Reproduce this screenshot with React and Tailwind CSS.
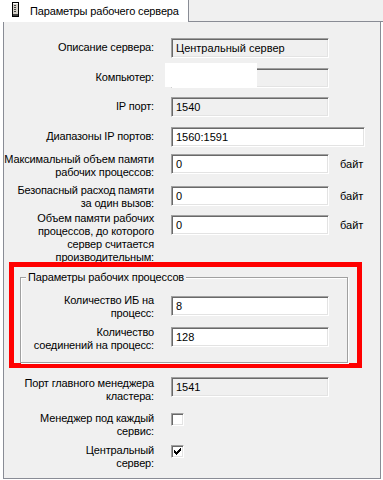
import React from 'react';

// Подпись справа, строки задаются явно
const Label = ({ lines, className = '' }) => (
  <div className={`shrink-0 flex flex-col items-end leading-[13px] tracking-[-0.15px] ${className}`}>
    {lines.map((l) => (
      <div key={l} className="whitespace-nowrap">
        {l}
      </div>
    ))}
  </div>
);

// Поле ввода в стиле Windows (утопленная рамка)
const Field = ({ value, readOnly, className = '' }) => (
  <div
    className={`h-[20px] shrink-0 border border-t-[#a0a0a0] border-l-[#a0a0a0] border-r-white border-b-white shadow-[inset_1px_1px_0_#696969,inset_-1px_-1px_0_#e3e3e3] pl-[4px] flex items-center leading-[13px] whitespace-nowrap ${readOnly ? 'bg-[#f0f0f0]' : 'bg-white'} ${className}`}
  >
    {value}
  </div>
);

const CheckBox = ({ checked, className = '' }) => (
  <div
    className={`w-[13px] h-[13px] shrink-0 border border-t-[#a0a0a0] border-l-[#a0a0a0] border-r-white border-b-white shadow-[inset_1px_1px_0_#696969,inset_-1px_-1px_0_#e3e3e3] bg-white flex items-center justify-center ${className}`}
  >
    {checked && (
      <svg width="7" height="7" viewBox="0 0 7 7" shapeRendering="crispEdges">
        <path
          fill="#000"
          d="M6 0h1v1h-1z M5 1h2v1h-2z M0 2h1v1h-1z M4 2h3v1h-3z M0 3h2v1h-2z M3 3h3v1h-3z M0 4h5v1h-5z M1 5h3v1h-3z M2 6h1v1h-1z"
        />
      </svg>
    )}
  </div>
);

const ServerIcon = () => (
  <svg width="7" height="15" viewBox="0 0 7 15" shapeRendering="crispEdges">
    <rect x="0.5" y="0.5" width="6" height="14" fill="#d4d0c8" stroke="#000" />
    <rect x="1" y="1" width="5" height="1" fill="#fff" />
    <path d="M2 3.5h2M2 5.5h2M2 7.5h2M2 9.5h2" stroke="#404040" />
    <rect x="1" y="12" width="5" height="2" fill="#404040" />
  </svg>
);

const Byte = () => <div className="ml-[11px] h-[20px] flex items-center">байт</div>;

export default function App() {
  return (
    <div className="w-[383px] h-[480px] bg-white font-['Liberation_Sans',Arial,sans-serif] text-[11px] text-black overflow-hidden">
      {/* Вкладка */}
      <div className="flex h-[22px]">
        <div className="w-[189px] h-[22px] bg-white border-r border-[#898c95] flex items-start pl-[12px]">
          <div className="mt-[2px]">
            <ServerIcon />
          </div>
          <div className="ml-[11px] mt-[5px] leading-[13px] tracking-[-0.15px] whitespace-nowrap">Параметры рабочего сервера</div>
        </div>
        <div className="flex-1 h-[22px] bg-[#f0f0f0] border-b border-[#898c95]" />
      </div>

      {/* Панель */}
      <div className="ml-[3px] w-[378px] bg-[#f0f0f0] border-l border-r border-b border-[#898c95] pt-[16px] pb-[8px] flex flex-col">
        <div className="flex items-start">
          <Label lines={['Описание сервера:']} className="w-[150px] pt-[3px]" />
          <Field readOnly value="Центральный сервер" className="ml-[17px] w-[158px]" />
        </div>

        <div className="flex items-start mt-[10px]">
          <Label lines={['Компьютер:']} className="w-[150px] pt-[3px]" />
          <div className="relative ml-[17px]">
            <Field readOnly value="" className="w-[158px]" />
            <div className="absolute left-[-6px] top-[-5px] w-[92px] h-[24px] bg-white" />
          </div>
        </div>

        <div className="flex items-start mt-[9px]">
          <Label lines={['IP порт:']} className="w-[150px] pt-[3px]" />
          <Field readOnly value="1540" className="ml-[17px] w-[158px]" />
        </div>

        <div className="flex items-start mt-[10px]">
          <Label lines={['Диапазоны IP портов:']} className="w-[150px] pt-[3px]" />
          <Field value="1560:1591" className="ml-[17px] w-[194px]" />
        </div>

        <div className="flex items-start mt-[6px]">
          <Label lines={['Максимальный объем памяти', 'рабочих процессов:']} className="w-[150px]" />
          <div className="flex mt-[1px]">
            <Field value="0" className="ml-[17px] w-[158px]" />
            <Byte />
          </div>
        </div>

        <div className="flex items-start mt-[5px]">
          <Label lines={['Безопасный расход памяти', 'за один вызов:']} className="w-[150px]" />
          <div className="flex mt-[2px]">
            <Field value="0" className="ml-[17px] w-[158px]" />
            <Byte />
          </div>
        </div>

        <div className="flex items-start mt-[2px]">
          <Label
            lines={['Объем памяти рабочих', 'процессов, до которого', 'сервер считается', 'производительным:']}
            className="w-[150px]"
          />
          <div className="flex mt-[3px]">
            <Field value="0" className="ml-[17px] w-[158px]" />
            <Byte />
          </div>
        </div>

        {/* Красная рамка с группой */}
        <div className="mt-[-2px] ml-[5px] w-[353px] border-[5px] border-[#ff0000]">
          <fieldset className="mt-[4px] ml-[6px] w-[328px] border border-[#a0a0a0] shadow-[inset_1px_1px_0_#fff,1px_1px_0_#fff] pb-[10px]">
            <legend className="ml-[5px] px-[2px] leading-[13px] tracking-[-0.15px] bg-[#f0f0f0]">Параметры рабочих процессов</legend>
            <div className="flex items-start mt-[10px]">
              <Label lines={['Количество ИБ на', 'процесс:']} className="w-[133px]" />
              <Field value="8" className="ml-[17px] w-[158px] mt-[2px]" />
            </div>
            <div className="flex items-start mt-[6px]">
              <Label lines={['Количество', 'соединений на процесс:']} className="w-[133px]" />
              <Field value="128" className="ml-[17px] w-[158px] mt-[1px]" />
            </div>
          </fieldset>
        </div>

        <div className="flex items-start mt-[9px]">
          <Label lines={['Порт главного менеджера', 'кластера:']} className="w-[150px]" />
          <Field readOnly value="1541" className="ml-[17px] w-[158px]" />
        </div>

        <div className="flex items-start mt-[9px]">
          <Label lines={['Менеджер под каждый', 'сервис:']} className="w-[150px]" />
          <CheckBox className="ml-[17px] mt-[1px]" />
        </div>

        <div className="flex items-start mt-[6px]">
          <Label lines={['Центральный', 'сервер:']} className="w-[150px]" />
          <CheckBox checked className="ml-[17px] mt-[1px]" />
        </div>
      </div>
    </div>
  );
}
